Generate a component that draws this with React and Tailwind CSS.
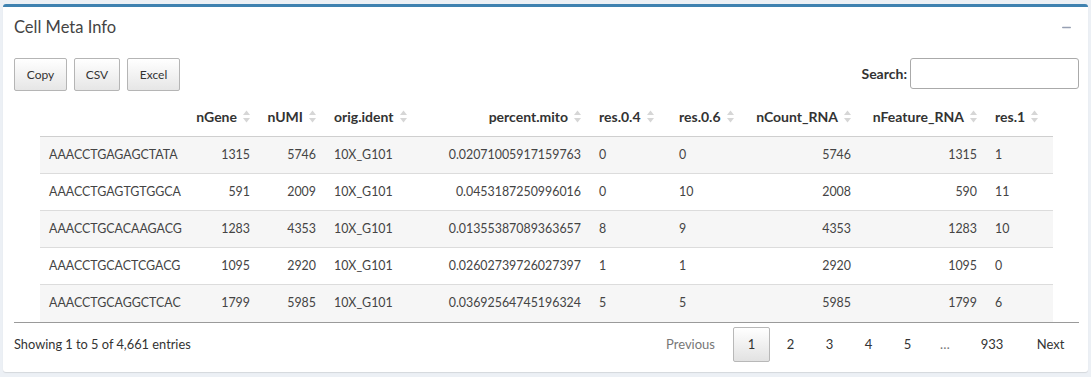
import { Minus } from 'lucide-react';

const cols = [
  { key: 'name', label: '', align: 'left' },
  { key: 'nGene', label: 'nGene', align: 'right' },
  { key: 'nUMI', label: 'nUMI', align: 'right' },
  { key: 'ident', label: 'orig.ident', align: 'left' },
  { key: 'mito', label: 'percent.mito', align: 'right' },
  { key: 'r04', label: 'res.0.4', align: 'left' },
  { key: 'r06', label: 'res.0.6', align: 'left' },
  { key: 'nCount', label: 'nCount_RNA', align: 'right' },
  { key: 'nFeature', label: 'nFeature_RNA', align: 'right' },
  { key: 'r1', label: 'res.1', align: 'left' },
];

const rows = [
  ['AAACCTGAGAGCTATA', '1315', '5746', '10X_G101', '0.02071005917159763', '0', '0', '5746', '1315', '1'],
  ['AAACCTGAGTGTGGCA', '591', '2009', '10X_G101', '0.0453187250996016', '0', '10', '2008', '590', '11'],
  ['AAACCTGCACAAGACG', '1283', '4353', '10X_G101', '0.01355387089363657', '8', '9', '4353', '1283', '10'],
  ['AAACCTGCACTCGACG', '1095', '2920', '10X_G101', '0.02602739726027397', '1', '1', '2920', '1095', '0'],
  ['AAACCTGCAGGCTCAC', '1799', '5985', '10X_G101', '0.03692564745196324', '5', '5', '5985', '1799', '6'],
];

const grid = 'grid grid-cols-[140px_79px_66px_115px_150px_80px_80px_110px_126px_67px]';

function SortArrows() {
  return (
    <svg width="7" height="13" viewBox="0 0 7 13" className="ml-[6px] shrink-0">
      <polygon points="0,5 3.5,0.5 7,5" fill="#d6d6d6" />
      <polygon points="0,8 3.5,12.5 7,8" fill="#d6d6d6" />
    </svg>
  );
}

function ToolButton({ children, width }) {
  return (
    <button
      className={`${width} h-[33px] rounded-[2px] border border-[#b5b5b5] bg-gradient-to-b from-white to-[#e6e6e6] text-[12px] text-[#333]`}
    >
      {children}
    </button>
  );
}

function PageButton({ children, width, current, muted }) {
  return (
    <div
      className={`${width} h-[35px] flex items-center justify-center rounded-[2px] border text-[13px] ${
        current
          ? 'border-[#b8b8b8] bg-gradient-to-b from-white to-[#e2e2e2]'
          : 'border-transparent'
      } ${muted ? 'text-[#777]' : 'text-[#333]'}`}
    >
      {children}
    </div>
  );
}

export default function App() {
  return (
    <div
      className="w-[1091px] h-[377px] bg-[#ecf0f5] pt-[4px] pl-[3px]"
      style={{ fontFamily: '"Source Sans Pro", Lato, "Helvetica Neue", sans-serif' }}
    >
      <div className="w-[1085px] rounded-[3px] border-t-[3px] border-[#3f82b0] bg-white shadow-[0_1px_1px_rgba(0,0,0,0.1)]">
        {/* header */}
        <div className="h-[41px] flex items-center justify-between pl-[11px] pr-[15px]">
          <h3 className="text-[16.5px] text-[#444] leading-none">Cell Meta Info</h3>
          <Minus size={13} strokeWidth={2.5} color="#97a0b3" />
        </div>

        {/* body */}
        <div className="pt-[10px] pl-[11px] pr-[9px] pb-[10px]">
          <div className="flex items-start justify-between h-[33px]">
            <div className="flex gap-[7px]">
              <ToolButton width="w-[53px]">Copy</ToolButton>
              <ToolButton width="w-[46px]">CSV</ToolButton>
              <ToolButton width="w-[53px]">Excel</ToolButton>
            </div>
            <div className="flex items-center gap-[3px]">
              <span className="text-[14px] font-bold text-[#333]">Search:</span>
              <input className="w-[169px] h-[31px] rounded-[3px] border border-[#aaa] bg-white outline-none" />
            </div>
          </div>

          {/* table */}
          <div className="mt-[5px] border-b border-[#9a9a9a]">
            <div className="w-[1013px] mx-auto text-[#333]">
              <div className={`${grid} h-[41px] border-b border-[#cfcfcf] text-[14px] font-bold`}>
                {cols.map((c) => (
                  <div
                    key={c.key}
                    className={`flex items-center px-[9px] ${c.align === 'right' ? 'justify-end' : 'justify-start'}`}
                  >
                    {c.label && (
                      <>
                        <span>{c.label}</span>
                        <SortArrows />
                      </>
                    )}
                  </div>
                ))}
              </div>
              {rows.map((r, i) => (
                <div
                  key={r[0]}
                  className={`${grid} h-[37px] text-[12.4px] ${i < 4 ? 'border-b border-[#dcdcdc]' : ''} ${
                    i % 2 === 0 ? 'bg-[#f6f6f6]' : 'bg-white'
                  } text-[#444]`}
                >
                  {r.map((v, j) => (
                    <div
                      key={j}
                      className={`flex items-center px-[9px] ${cols[j].align === 'right' ? 'justify-end' : 'justify-start'}`}
                    >
                      {v}
                    </div>
                  ))}
                </div>
              ))}
            </div>
          </div>

          {/* footer */}
          <div className="flex items-center justify-between pt-[4px]">
            <span className="text-[12.8px] text-[#333]">Showing 1 to 5 of 4,661 entries</span>
            <div className="flex gap-[2px]">
              <PageButton width="w-[81px]" muted>Previous</PageButton>
              <PageButton width="w-[37px]" current>1</PageButton>
              <PageButton width="w-[37px]">2</PageButton>
              <PageButton width="w-[37px]">3</PageButton>
              <PageButton width="w-[37px]">4</PageButton>
              <PageButton width="w-[37px]">5</PageButton>
              <PageButton width="w-[34px]" muted>…</PageButton>
              <PageButton width="w-[56px]">933</PageButton>
              <PageButton width="w-[57px]">Next</PageButton>
            </div>
          </div>
        </div>
      </div>
    </div>
  );
}
